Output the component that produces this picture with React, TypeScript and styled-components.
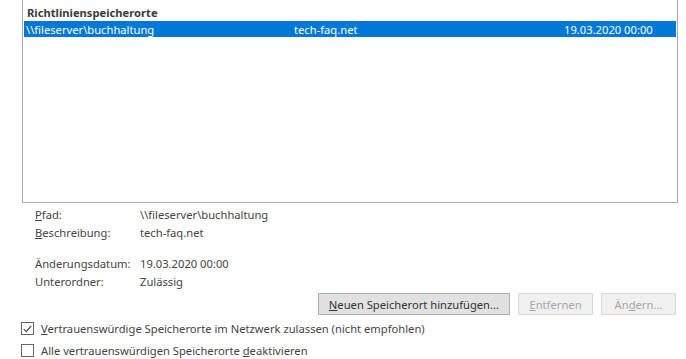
import React from "react";
import styled, {createGlobalStyle} from "styled-components";

const GlobalStyle = createGlobalStyle`
  html, body {
    margin: 0;
    padding: 0;
    background: #fff;
  }

  body {
    font-family: "Noto Sans", "Liberation Sans", sans-serif;
    font-size: 11.2px;
    color: #444;
  }
`

const locations = [
    {path: "\\\\fileserver\\buchhaltung", description: "tech-faq.net", date: "19.03.2020 00:00"},
];

export default function App() {
    const selected = locations[0];
    return (
        <>
            <GlobalStyle/>
            <Page>
                <ListBox>
                    <ListHeader>Richtlinienspeicherorte</ListHeader>
                    {locations.map((loc, i) => (
                        <ListRow key={i} selected={i === 0}>
                            <span>{loc.path}</span>
                            <span>{loc.description}</span>
                            <span>{loc.date}</span>
                        </ListRow>
                    ))}
                </ListBox>

                <Details>
                    <DetailGroup>
                        <Label><u>P</u>fad:</Label>
                        <Value>{selected.path}</Value>
                        <Label><u>B</u>eschreibung:</Label>
                        <Value>{selected.description}</Value>
                    </DetailGroup>
                    <DetailGroup>
                        <Label>Änderungsdatum:</Label>
                        <Value>{selected.date}</Value>
                        <Label>Unterordner:</Label>
                        <Value>Zulässig</Value>
                    </DetailGroup>
                </Details>

                <ButtonRow>
                    <Button><u>N</u>euen Speicherort hinzufügen...</Button>
                    <Button disabled><u>E</u>ntfernen</Button>
                    <Button disabled>Än<u>d</u>ern...</Button>
                </ButtonRow>

                <CheckList>
                    <CheckRow>
                        <Box>
                            <svg width="9" height="8" viewBox="0 0 9 8">
                                <path d="M0.8 4.2 L3.3 6.6 L8.2 0.8" fill="none" stroke="#444" strokeWidth="1.1"/>
                            </svg>
                        </Box>
                        <span><u>V</u>ertrauenswürdige Speicherorte im Netzwerk zulassen (nicht empfohlen)</span>
                    </CheckRow>
                    <CheckRow>
                        <Box/>
                        <span>Alle vertrauenswürdigen Speicherorte <u>d</u>eaktivieren</span>
                    </CheckRow>
                </CheckList>
            </Page>
        </>
    );
}

const Page = styled.div`
  width: 686px;
  height: 359px;
  overflow: hidden;
  display: flex;
  flex-direction: column;
`

const ListBox = styled.div`
  margin-left: 22px;
  width: 652px;
  height: 202px;
  border: 1px solid #aaa;
  border-top: none;
  background: #fff;
  padding: 0 1px;
  flex-shrink: 0;
`

const ListHeader = styled.div`
  height: 21px;
  line-height: 26px;
  padding-left: 3px;
  font-weight: bold;
  color: #3b3b3b;
`

const ListRow = styled.div<{ selected?: boolean }>`
  display: grid;
  grid-template-columns: 268px 270px auto;
  height: 16px;
  line-height: 17px;
  padding-left: 2px;
  background: ${p => p.selected ? "#0078d7" : "transparent"};
  color: ${p => p.selected ? "#fff" : "#444"};
`

const Details = styled.div`
  display: flex;
  flex-direction: column;
  gap: 13px;
  margin: 3px 0 0 35px;
`

const DetailGroup = styled.div`
  display: grid;
  grid-template-columns: 105px auto;
  grid-auto-rows: 18px;
  line-height: 18px;
`

const Label = styled.span`
  color: #444;
`

const Value = styled.span`
  color: #444;
`

const ButtonRow = styled.div`
  display: flex;
  justify-content: flex-end;
  gap: 8px;
  padding-right: 10px;
  margin-top: 2px;
`

const Button = styled.button`
  font-family: inherit;
  font-size: 11.2px;
  height: 22px;
  min-width: 75px;
  padding: 0 10px;
  border: 1px solid ${p => p.disabled ? "#d9d9d9" : "#adadad"};
  background: ${p => p.disabled ? "#f0f0f0" : "#e1e1e1"};
  color: ${p => p.disabled ? "#a6a6a6" : "#333"};
  border-radius: 0;
`

const CheckList = styled.div`
  display: flex;
  flex-direction: column;
  gap: 9px;
  margin: 7px 0 0 21px;
`

const CheckRow = styled.label`
  display: flex;
  align-items: center;
  gap: 7px;
  height: 13px;
  color: #444;
`

const Box = styled.span`
  width: 11px;
  height: 11px;
  border: 1px solid #666;
  background: #fff;
  display: flex;
  align-items: center;
  justify-content: center;
  flex-shrink: 0;
`
